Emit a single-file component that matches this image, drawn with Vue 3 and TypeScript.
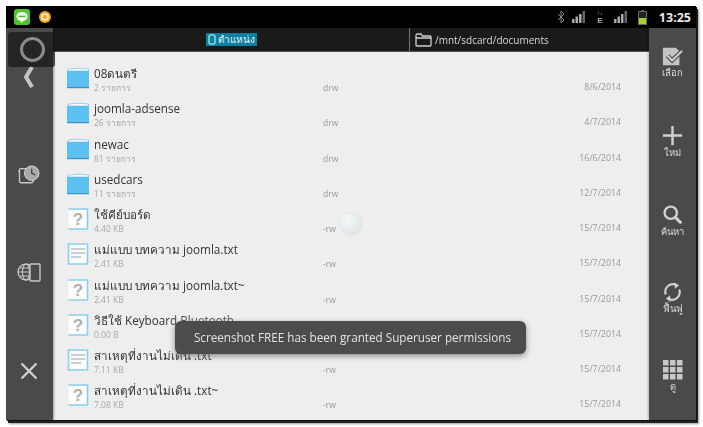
<script setup lang="ts">
interface Row { name: string; sub: string; perm: string; date: string; kind: 'folder' | 'unknown' | 'text' }
const rows: Row[] = [
  { name: '08ดนตรี', sub: '2 รายการ', perm: 'drw', date: '8/6/2014', kind: 'folder' },
  { name: 'joomla-adsense', sub: '26 รายการ', perm: 'drw', date: '4/7/2014', kind: 'folder' },
  { name: 'newac', sub: '81 รายการ', perm: 'drw', date: '16/6/2014', kind: 'folder' },
  { name: 'usedcars', sub: '11 รายการ', perm: 'drw', date: '12/7/2014', kind: 'folder' },
  { name: 'ใช้คีย์บอร์ด', sub: '4.40 KB', perm: '-rw', date: '15/7/2014', kind: 'unknown' },
  { name: 'แม่แบบ บทความ joomla.txt', sub: '2.41 KB', perm: '-rw', date: '15/7/2014', kind: 'text' },
  { name: 'แม่แบบ บทความ joomla.txt~', sub: '2.41 KB', perm: '-rw', date: '15/7/2014', kind: 'unknown' },
  { name: 'วิธีใช้ Keyboard Bluetooth', sub: '0.00 B', perm: '-rw', date: '15/7/2014', kind: 'unknown' },
  { name: 'สาเหตุที่งานไม่เดิน .txt', sub: '7.11 KB', perm: '-rw', date: '15/7/2014', kind: 'text' },
  { name: 'สาเหตุที่งานไม่เดิน .txt~', sub: '7.08 KB', perm: '-rw', date: '15/7/2014', kind: 'unknown' },
]
</script>

<template>
  <div class="page">
    <div class="screen">
      <header class="status">
        <svg class="line-app" width="16" height="16" viewBox="0 0 16 16">
          <rect width="16" height="16" rx="3" fill="#4fc72c" />
          <ellipse cx="8" cy="7.5" rx="5.6" ry="4.6" fill="#f2fff0" />
          <path d="M6.5 11.5 L7 14 L10 11.5Z" fill="#f2fff0" />
          <rect x="4.5" y="6.6" width="7" height="1.6" fill="#58b83c" />
        </svg>
        <svg class="orange" width="12" height="12" viewBox="0 0 12 12">
          <circle cx="6" cy="6" r="6" fill="#f0a52a" />
          <circle cx="6" cy="6" r="3" fill="none" stroke="#fff3d0" stroke-width="1.6" />
        </svg>
        <div class="status-right">
          <svg width="8" height="14" viewBox="0 0 8 14" class="bt">
            <path d="M1 4 L7 10 L4 13 V1 L7 4 L1 10" fill="none" stroke="#888" stroke-width="1" />
          </svg>
          <svg width="14" height="12" viewBox="0 0 14 12" class="sig1">
            <rect x="0" y="8" width="2.5" height="4" fill="#aaa" /><rect x="3.5" y="5.5" width="2.5" height="6.5" fill="#aaa" />
            <rect x="7" y="3" width="2.5" height="9" fill="#aaa" /><rect x="10.5" y="0" width="2.5" height="12" fill="#666" />
          </svg>
          <span class="edge"><i>↑↓</i>E</span>
          <svg width="14" height="12" viewBox="0 0 14 12" class="sig2">
            <rect x="0" y="8" width="2.5" height="4" fill="#aaa" /><rect x="3.5" y="5.5" width="2.5" height="6.5" fill="#aaa" />
            <rect x="7" y="3" width="2.5" height="9" fill="#aaa" /><rect x="10.5" y="0" width="2.5" height="12" fill="#666" />
          </svg>
          <svg width="9" height="15" viewBox="0 0 9 15" class="batt">
            <rect x="3" y="0" width="3" height="2" fill="#666" />
            <rect x="0.5" y="1.5" width="8" height="13" fill="#222" stroke="#666" />
            <rect x="1" y="8" width="7" height="6" fill="#a4d62a" />
          </svg>
          <span class="clock">13:25</span>
        </div>
      </header>

      <div class="main">
        <aside class="left-rail">
          <svg class="chev" width="11" height="22" viewBox="0 0 11 22"><path d="M9 1 L3 11 L9 21" fill="none" stroke="#c4c4c4" stroke-width="4" /></svg>
          <svg class="recent" width="24" height="20" viewBox="0 0 24 22">
            <path d="M9 4 H3 Q1.5 4 1.5 5.5 V18 Q1.5 19.5 3 19.5 H15 Q16.5 19.5 16.5 18 V15" fill="none" stroke="#c8c8c8" stroke-width="1.5" />
            <path d="M1.5 7 L0 7" stroke="#c8c8c8" stroke-width="1.5" />
            <circle cx="15" cy="9" r="8" fill="#aaa" stroke="#ddd" stroke-width="1" />
            <path d="M15 4 V9 L19 11" fill="none" stroke="#333" stroke-width="1.2" />
          </svg>
          <svg class="net" width="24" height="22" viewBox="0 0 24 22">
            <circle cx="9" cy="11" r="8" fill="none" stroke="#c8c8c8" stroke-width="1.3" />
            <ellipse cx="9" cy="11" rx="3.5" ry="8" fill="none" stroke="#c8c8c8" stroke-width="1.1" />
            <path d="M1 11 H17 M2.5 7 H15.5 M2.5 15 H15.5" stroke="#c8c8c8" stroke-width="1.1" />
            <rect x="13" y="3" width="10" height="17" rx="1" fill="#4a4a4a" stroke="#c8c8c8" stroke-width="1.4" />
          </svg>
          <svg class="close" width="18" height="18" viewBox="0 0 18 18"><path d="M1.5 1.5 L16.5 16.5 M16.5 1.5 L1.5 16.5" stroke="#cfcfcf" stroke-width="2.4" /></svg>
        </aside>

        <div class="center">
          <nav class="tabs">
            <div class="tab-left">
              <span class="location">
                <svg width="8" height="11" viewBox="0 0 8 11"><rect x="1" y="1" width="6" height="9" rx="1" fill="none" stroke="#dff" stroke-width="1" /></svg>
                ตำแหน่ง
              </span>
            </div>
            <div class="tab-right">
              <svg width="17" height="14" viewBox="0 0 17 14"><path d="M1 12 V2.5 Q1 1 2.5 1 H6 L7.5 3 H15 Q16 3 16 4 V12 Q16 13 15 13 H2 Q1 13 1 12 Z M1 5 H16" fill="none" stroke="#d0d0d0" stroke-width="1.3" /></svg>
              <span>/mnt/sdcard/documents</span>
            </div>
          </nav>

          <ul class="list">
            <li v-for="row in rows" :key="row.name" class="row">
              <svg v-if="row.kind === 'folder'" class="ficon" width="22" height="22" viewBox="0 0 22 22">
                <path d="M0.5 4 Q0.5 2 2.5 2 Q11 0.5 21.5 2 V4Z" fill="#fff" stroke="#56b7e6" stroke-width="0.6" />
                <rect x="0" y="4" width="22" height="17" fill="#5cc0f0" />
                <rect x="0" y="20" width="22" height="1.2" fill="#3c8fb8" />
              </svg>
              <svg v-else-if="row.kind === 'unknown'" class="ficon" width="22" height="22" viewBox="0 0 22 22">
                <rect x="1.5" y="1" width="19" height="20" fill="#fbfbfb" />
                <path d="M1.5 1 H20.5 V21 H1.5" fill="none" stroke="#8cd0e8" stroke-width="1.6" />
                <text x="11" y="17" text-anchor="middle" class="q">?</text>
              </svg>
              <svg v-else class="ficon" width="22" height="22" viewBox="0 0 22 22">
                <rect x="1.5" y="1" width="19" height="20" fill="#fbfbfb" />
                <path d="M1.5 1 H20.5 V21 H1.5 Z" fill="none" stroke="#8cd0e8" stroke-width="1.6" />
                <path d="M4 6 H18 M4 10 H18 M4 14 H14" stroke="#b4c4c8" stroke-width="1.4" />
              </svg>
              <div class="names">
                <div class="name">{{ row.name }}</div>
                <div class="sub">{{ row.sub }}</div>
              </div>
              <span class="perm">{{ row.perm }}</span>
              <span class="date">{{ row.date }}</span>
            </li>
          </ul>
        </div>

        <aside class="right-rail">
          <div class="action first">
            <svg width="22" height="19" viewBox="0 0 24 24" preserveAspectRatio="none">
              <path d="M1 1 H15 L19 5 V23 H1Z" fill="#c4c4c4" />
              <path d="M6 11 L11 17 L22 5" fill="none" stroke="#4a4a4a" stroke-width="5" />
              <path d="M6 11 L11 17 L22 5" fill="none" stroke="#cfcfcf" stroke-width="2.4" />
            </svg>
            <span>เลือก</span>
          </div>
          <div class="action">
            <svg width="21" height="21" viewBox="0 0 24 24"><path d="M12 1 V23 M1 12 H23" stroke="#cfcfcf" stroke-width="2.8" /></svg>
            <span>ใหม่</span>
          </div>
          <div class="action">
            <svg width="21" height="21" viewBox="0 0 24 24">
              <circle cx="10" cy="10" r="7" fill="none" stroke="#cfcfcf" stroke-width="2.8" />
              <path d="M15 15 L22 22" stroke="#cfcfcf" stroke-width="3.6" />
            </svg>
            <span>ค้นหา</span>
          </div>
          <div class="action">
            <svg width="21" height="20" viewBox="0 0 24 24">
              <path d="M4 15 A9 9 0 0 1 17 4" fill="none" stroke="#cfcfcf" stroke-width="2.6" />
              <path d="M20 9 A9 9 0 0 1 7 20" fill="none" stroke="#cfcfcf" stroke-width="2.6" />
              <path d="M14 0.5 L20 4 L15 8Z M10 24 L4 20 L9 16Z" fill="#cfcfcf" />
            </svg>
            <span>ฟื้นฟู</span>
          </div>
          <div class="action">
            <svg width="20" height="20" viewBox="0 0 20 20">
              <g fill="#c8c8c8">
                <rect x="0" y="0" width="5.5" height="5.5" /><rect x="7" y="0" width="5.5" height="5.5" /><rect x="14" y="0" width="5.5" height="5.5" />
                <rect x="0" y="7" width="5.5" height="5.5" /><rect x="7" y="7" width="5.5" height="5.5" /><rect x="14" y="7" width="5.5" height="5.5" />
                <rect x="0" y="14" width="5.5" height="5.5" /><rect x="7" y="14" width="5.5" height="5.5" /><rect x="14" y="14" width="5.5" height="5.5" />
              </g>
            </svg>
            <span>ดู</span>
          </div>
        </aside>

        <div class="float-btn"><div class="ring"></div></div>
        <div class="spinner"></div>
        <div class="toast">Screenshot FREE has been granted Superuser permissions</div>
      </div>
    </div>
  </div>
</template>

<style>
html, body { margin: 0; background: #fff; }
</style>

<style scoped>
.page {
  width: 703px;
  height: 427px;
  box-sizing: border-box;
  padding: 6px 7px 7px 6px;
  background: #fff;
  overflow: hidden;
  font-family: "Open Sans", "Noto Sans", "Noto Sans CJK SC", sans-serif;
}
.screen {
  height: 414px;
  display: flex;
  flex-direction: column;
  box-shadow: 1px 1px 0 #111, 2px 3px 0 #222, 3px 4px 2px #999;
  filter: blur(0.3px);
}
.status {
  height: 22px;
  flex: none;
  background: #000;
  display: flex;
  align-items: center;
  padding-left: 8px;
}
.orange { margin-left: 9px; }
.status-right {
  margin-left: auto;
  display: flex;
  align-items: center;
  height: 100%;
  padding-right: 5px;
}
.bt { margin-right: 7px; }
.sig1 { margin-right: 10px; }
.edge {
  width: 8px;
  color: #aaa;
  font: bold 8px/7px "Liberation Sans", sans-serif;
  margin-right: 10px;
  text-align: center;
}
.edge i { display: block; font-style: normal; font-size: 6px; }
.sig2 { margin-right: 10px; }
.batt { margin-right: 12px; }
.clock {
  color: #e8e8e8;
  font: bold 12.5px "Open Sans", sans-serif;
}
.main {
  flex: 1;
  min-height: 0;
  display: flex;
  position: relative;
}
.left-rail {
  width: 47px;
  flex: none;
  background: #4a4a4a;
  box-shadow: 1px 0 2px rgba(0, 0, 0, 0.35);
  z-index: 1;
  display: flex;
  flex-direction: column;
  align-items: center;
}
.chev { margin-top: 38px; margin-left: -2px; }
.recent { margin-top: 77px; margin-left: -1px; }
.net { margin-top: 76px; margin-left: -1px; }
.close { margin-top: 79px; margin-left: -1px; }
.center {
  flex: 1;
  min-width: 0;
  display: flex;
  flex-direction: column;
}
.tabs {
  height: 24px;
  flex: none;
  background: #1a1a1a;
  border-bottom: 1px solid #555;
  box-sizing: border-box;
  display: flex;
  color: #d8d8d8;
  font-size: 10px;
}
.tab-left {
  width: 356px;
  display: flex;
  align-items: center;
  justify-content: center;
  box-sizing: border-box;
}
.location {
  display: flex;
  align-items: center;
  gap: 2px;
  background: #0d7f9f;
  color: #e4f6fa;
  padding: 0 2px;
  height: 13px;
  line-height: 13px;
  font-size: 10px;
  white-space: nowrap;
}
.tab-right {
  flex: 1;
  border-left: 1px solid #777;
  display: flex;
  align-items: center;
  gap: 3px;
  padding-left: 5px;
}
.list {
  flex: 1;
  min-height: 0;
  margin: 0;
  padding: 9px 0 0;
  list-style: none;
  background: #eee;
  overflow: hidden;
}
.row {
  height: 35.25px;
  display: flex;
  align-items: flex-start;
  position: relative;
}
.ficon { margin: 6px 0 0 14px; flex: none; }
.names { margin-left: 5px; width: 220px; flex: none; }
.name {
  color: #333;
  font-size: 11.7px;
  line-height: 17px;
  margin-top: 4px;
  white-space: nowrap;
}
.sub {
  color: #a8a8a8;
  font-size: 8.5px;
  line-height: 11px;
}
.perm {
  position: absolute;
  left: 270px;
  top: 21px;
  color: #999;
  font-size: 8.5px;
  line-height: 11px;
}
.date {
  margin-left: auto;
  margin-right: 28px;
  margin-top: 21px;
  color: #999;
  font-size: 8.8px;
  line-height: 11px;
}
.q {
  font: bold 17px "Liberation Sans", sans-serif;
  fill: #b0b0b0;
}
.right-rail {
  width: 47px;
  flex: none;
  background: #4a4a4a;
  box-shadow: -1px 0 2px rgba(0, 0, 0, 0.25);
  display: flex;
  flex-direction: column;
  align-items: center;
  padding-top: 19px;
  box-sizing: border-box;
}
.action {
  height: 78.25px;
  display: flex;
  flex-direction: column;
  align-items: center;
  color: #dcdcdc;
  font-size: 9.5px;
  line-height: 12px;
  gap: 1px;
  flex: none;
}
.float-btn {
  position: absolute;
  left: 2px;
  top: 4px;
  width: 47px;
  height: 35px;
  padding-left: 2px;
  box-sizing: border-box;
  background: rgba(24, 24, 24, 0.72);
  border-radius: 3px;
  z-index: 2;
  display: flex;
  align-items: center;
  justify-content: center;
}
.ring {
  width: 19px;
  height: 19px;
  border: 3px solid #8c8c8c;
  border-radius: 50%;
}
.spinner {
  position: absolute;
  left: 334px;
  top: 185px;
  width: 22px;
  height: 22px;
  border-radius: 50%;
  background: radial-gradient(circle at 35% 30%, #f6f8f9, #e0e6e9 70%, #d8dee1);
  box-shadow: 0 0 2px rgba(0, 0, 0, 0.1);
}
.toast {
  position: absolute;
  left: 169px;
  top: 293px;
  width: 351px;
  height: 33px;
  box-sizing: border-box;
  padding-left: 4px;
  background: #4c4c4c;
  border-radius: 6px;
  box-shadow: 0 2px 6px rgba(0, 0, 0, 0.45), 0 0 14px rgba(255, 255, 255, 0.5);
  color: #e4e4e4;
  font-size: 11.7px;
  line-height: 33px;
  text-align: center;
  white-space: nowrap;
  z-index: 3;
}
</style>
